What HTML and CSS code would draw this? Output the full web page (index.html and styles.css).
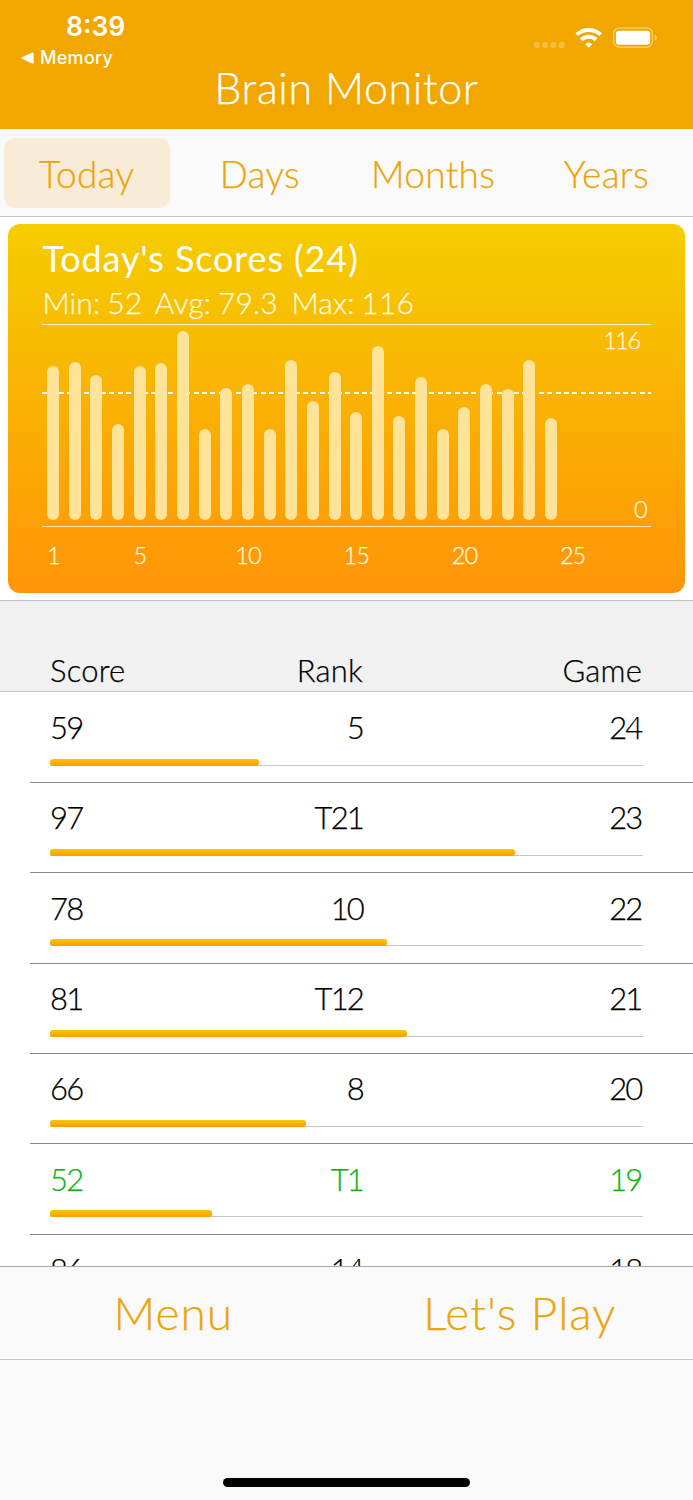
FILE: index.html
```
<!DOCTYPE html>
<html lang="en">
<head>
    <meta charset="UTF-8">
    <meta name="viewport" content="width=device-width, initial-scale=1.0">
    <title>Brain Monitor</title>
    <link rel="stylesheet" href="styles.css">
</head>
<body>
    <div class="app">
        <header class="header">
            <div class="status">
                <div class="status-left">
                    <div class="time">8:39</div>
                    <div class="back">
                        <svg width="13" height="12" viewBox="0 0 13 12"><path d="M1 5.2 L11 0.6 Q12.6 0 12.6 1.6 V10.4 Q12.6 12 11 11.4 L1 6.8 Q-0.4 6 1 5.2Z" fill="#fff"/></svg>
                        <span>Memory</span>
                    </div>
                </div>
                <svg class="status-icons" width="124" height="22" viewBox="0 0 124 22">
                    <g fill="#fff" fill-opacity="0.25">
                        <rect x="0.8" y="15" width="6" height="6" rx="2"/>
                        <rect x="9.1" y="15" width="6" height="6" rx="2"/>
                        <rect x="17.4" y="15" width="6" height="6" rx="2"/>
                        <rect x="25.7" y="15" width="6" height="6" rx="2"/>
                    </g>
                    <g fill="none" stroke="#fff" stroke-width="4">
                        <path d="M43.8 7.6 A17.6 17.6 0 0 1 67.6 7.6"/>
                        <path d="M48.3 12.8 A10.7 10.7 0 0 1 63.1 12.8"/>
                    </g>
                    <path d="M55.7 20.8 L52.2 17.2 A5.2 5.2 0 0 1 59.2 17.2Z" fill="#fff"/>
                    <rect x="80.7" y="1" width="38.6" height="19.2" rx="5.5" fill="none" stroke="#fff" stroke-opacity="0.4" stroke-width="1.5"/>
                    <rect x="83" y="3.8" width="34" height="14" rx="3" fill="#fff"/>
                    <path d="M121.7 7.7 Q123.8 8.7 123.8 10.8 Q123.8 12.9 121.7 13.9Z" fill="#fff" fill-opacity="0.5"/>
                </svg>
            </div>
            <h1>Brain Monitor</h1>
        </header>

        <nav class="tabs">
            <button class="tab active">Today</button>
            <button class="tab">Days</button>
            <button class="tab">Months</button>
            <button class="tab">Years</button>
        </nav>

        <div class="chart-area">
            <div class="card">
                <h2>Today's Scores (24)</h2>
                <p class="stats">Min: 52&nbsp; Avg: 79.3&nbsp; Max: 116</p>
                <div class="plot">
                    <div class="average"></div>
                    <div class="bars" id="bars"></div>
                    <span class="max-label">116</span>
                    <span class="min-label">0</span>
                </div>
                <div class="axis" id="axis"></div>
            </div>
        </div>

        <div class="table-head">
            <span class="score">Score</span>
            <span>Rank</span>
            <span>Game</span>
        </div>
        <div class="rows" id="rows"></div>

        <div class="toolbar">
            <button class="menu">Menu</button>
            <button class="play">Let's Play</button>
        </div>
        <div class="bottom">
            <div class="home"></div>
        </div>
    </div>

    <script>
        const scores = [93, 96, 87, 55, 93, 95, 116, 52, 79, 81, 52, 97,
                        70, 89, 63, 106, 60, 86, 52, 66, 81, 78, 97, 59];
        const ranks = { 24: '5', 23: 'T21', 22: '10', 21: 'T12', 20: '8', 19: 'T1', 18: '14' };
        const best = Math.min(...scores);
        const max = Math.max(...scores);

        // Chart bars, one per game
        document.getElementById('bars').innerHTML = scores
            .map(s => `<div class="bar" style="height: ${(12.6 + s * 1.523).toFixed(1)}px"></div>`)
            .join('');

        document.getElementById('axis').innerHTML = [1, 5, 10, 15, 20, 25]
            .map(n => `<span style="grid-column: ${n}">${n}</span>`)
            .join('');

        // Latest game first
        let html = '';
        for (let game = 24; game >= 18; game--) {
            const score = scores[game - 1];
            const width = (score - 28) / (max - 28) * 100;
            html += `
                <div class="row ${score === best ? 'best' : ''}">
                    <div class="values">
                        <span class="score">${score}</span>
                        <span>${ranks[game]}</span>
                        <span>${game}</span>
                    </div>
                    <div class="track"><div class="fill" style="width: ${width.toFixed(2)}%"></div></div>
                </div>`;
        }
        document.getElementById('rows').innerHTML = html;
    </script>
</body>
</html>
```

FILE: styles.css
```
* {
    box-sizing: border-box;
}
body {
    margin: 0;
    background-color: #fff;
    font-family: Lato, "Open Sans", sans-serif;
    font-weight: 300;
    color: #000;
    -webkit-text-stroke: 0.25px;
}
h1, h2, p {
    margin: 0;
}
button {
    padding: 0;
    border: none;
    background: none;
    font-family: inherit;
    font-weight: 300;
    color: #eba50a;
    cursor: pointer;
}
.app {
    display: flex;
    flex-direction: column;
    width: 693px;
    height: 1500px;
    overflow: hidden;
}
.header {
    height: 129px;
    flex: none;
    background-color: #f2a700;
    color: #fff;
}
.status {
    display: flex;
    justify-content: space-between;
    height: 64px;
    padding: 11px 36px 0 21px;
    font-family: Inter, sans-serif;
    -webkit-text-stroke: 0;
}
.time {
    padding-left: 45px;
    font-size: 26.5px;
    line-height: 31px;
    font-weight: 600;
}
.back {
    display: flex;
    align-items: center;
    gap: 6px;
    font-size: 18px;
    line-height: 32px;
    font-weight: 500;
    letter-spacing: 0.3px;
}
.status-icons {
    margin-top: 16px;
}
h1 {
    font-size: 43px;
    line-height: 48px;
    font-weight: 300;
    text-align: center;
    letter-spacing: 0.6px;
}
.tabs {
    display: grid;
    grid-template-columns: repeat(4, 1fr);
    height: 88px;
    flex: none;
    padding: 9px 0 8px;
    background-color: #fafafa;
    border-bottom: 1px solid #c4c4c4;
}
.tab {
    margin: 0 3.5px;
    border-radius: 11px;
    font-size: 37px;
    letter-spacing: 0.3px;
}
.tab.active {
    background-color: #f9ecd6;
}
.chart-area {
    height: 383px;
    flex: none;
    padding: 7.4px 8.4px;
}
.card {
    height: 368.3px;
    padding: 11.6px 34px 0;
    border-radius: 12px;
    background: linear-gradient(#f5cd00, #ff9507);
    color: #fff;
}
h2 {
    font-size: 36px;
    line-height: 44px;
    font-weight: 400;
    letter-spacing: 0.9px;
    -webkit-text-stroke: 0;
}
.stats {
    height: 44px;
    font-size: 30px;
    line-height: 44px;
    color: #fffbe0;
    letter-spacing: 0.15px;
    word-spacing: -1.5px;
}
.plot {
    position: relative;
    height: 203px;
    border-top: 1px solid #fff0bb;
    border-bottom: 1.5px solid #ffe4ab;
}
.average {
    position: absolute;
    top: 67px;
    left: 0;
    right: 0;
    height: 2px;
    background: repeating-linear-gradient(90deg, #fff 0 5px, transparent 5px 8.42px);
}
.bars, .axis {
    display: grid;
    grid-template-columns: repeat(28, 21.65px);
}
.bars {
    position: relative;
    height: 195.5px;
    align-items: end;
    justify-items: center;
}
.bar {
    width: 12px;
    border-radius: 6px;
    background-color: #ffe399;
}
.max-label, .min-label {
    position: absolute;
    font-size: 23.5px;
    line-height: 28px;
    color: #fffbe0;
}
.max-label {
    top: 1px;
    right: 11px;
    letter-spacing: -1.5px;
}
.min-label {
    bottom: 3px;
    right: 3px;
}
.axis {
    padding-top: 14px;
    font-size: 23.5px;
    line-height: 28px;
    letter-spacing: -1px;
    color: #fffbe0;
}
.axis span {
    display: flex;
    justify-content: center;
}
.table-head, .values {
    display: grid;
    grid-template-columns: 120px 193px 1fr;
    font-size: 31px;
    text-align: right;
}
.table-head .score, .values .score {
    text-align: left;
}
.table-head {
    height: 92px;
    flex: none;
    padding: 49px 51px 0 50px;
    line-height: 40px;
    letter-spacing: 0.2px;
    background-color: #f1f1f1;
    border-top: 1px solid #c4c4c4;
    border-bottom: 1px solid #c8c8c8;
}
.rows {
    height: 574px;
    flex: none;
    padding-top: 0.6px;
    overflow: hidden;
}
.row {
    height: 90.33px;
    margin-left: 30px;
    padding: 14.4px 50.5px 0 20px;
    border-bottom: 1px solid #8a8a8a;
}
.values {
    margin-right: 1px;
    line-height: 40px;
    letter-spacing: -1.8px;
}
.best {
    color: #11b211;
}
.track {
    height: 7px;
    margin-top: 11.6px;
    border-bottom: 1.5px solid #c6c6c8;
}
.fill {
    height: 7px;
    border-radius: 3px;
    background: linear-gradient(#f5c800, #ff9a05);
}
.toolbar {
    display: grid;
    grid-template-columns: 1fr 1fr;
    height: 94px;
    flex: none;
    background-color: #fafafa;
    border-top: 1px solid #a8a8a8;
    border-bottom: 1px solid #c4c4c4;
}
.toolbar button {
    padding-bottom: 2px;
    font-size: 46px;
    letter-spacing: 1px;
}
.bottom {
    display: flex;
    flex: 1;
    align-items: flex-end;
    justify-content: center;
    padding-bottom: 13.5px;
    background-color: #fafafa;
}
.home {
    width: 247px;
    height: 8.5px;
    border-radius: 5px;
    background-color: #000;
}
```
